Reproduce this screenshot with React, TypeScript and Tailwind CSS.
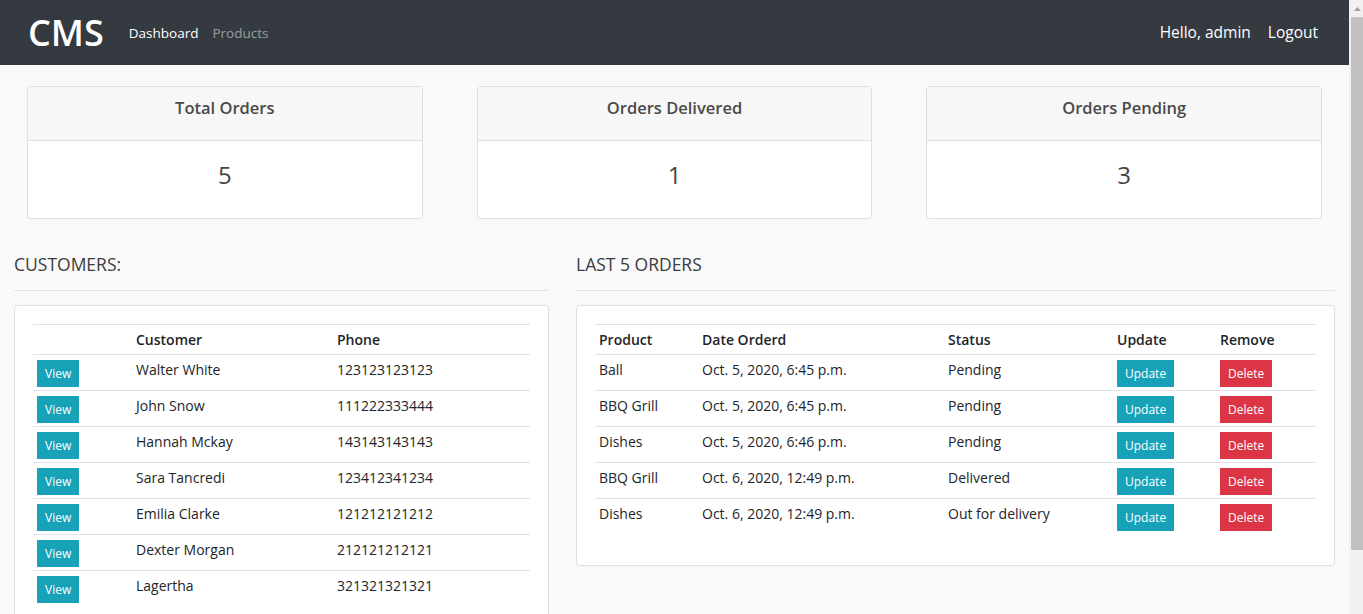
const customers = [
  { name: "Walter White", phone: "123123123123" },
  { name: "John Snow", phone: "111222333444" },
  { name: "Hannah Mckay", phone: "143143143143" },
  { name: "Sara Tancredi", phone: "123412341234" },
  { name: "Emilia Clarke", phone: "121212121212" },
  { name: "Dexter Morgan", phone: "212121212121" },
  { name: "Lagertha", phone: "321321321321" },
];

const orders = [
  { product: "Ball", date: "Oct. 5, 2020, 6:45 p.m.", status: "Pending" },
  { product: "BBQ Grill", date: "Oct. 5, 2020, 6:45 p.m.", status: "Pending" },
  { product: "Dishes", date: "Oct. 5, 2020, 6:46 p.m.", status: "Pending" },
  { product: "BBQ Grill", date: "Oct. 6, 2020, 12:49 p.m.", status: "Delivered" },
  { product: "Dishes", date: "Oct. 6, 2020, 12:49 p.m.", status: "Out for delivery" },
];

const stats = [
  { title: "Total Orders", value: 5 },
  { title: "Orders Delivered", value: 1 },
  { title: "Orders Pending", value: 3 },
];

function Btn({ label, color }: { label: string; color: "info" | "danger" }) {
  return (
    <button
      className={
        "h-[27px] px-2 text-[12px] leading-none text-white " +
        (color === "info" ? "bg-[#17a2b8]" : "bg-[#dc3545]")
      }
    >
      {label}
    </button>
  );
}

function SectionTitle({ children }: { children: string }) {
  return (
    <>
      <h5 className="text-[17.5px] leading-[21px] text-[#3d3d3d]">{children}</h5>
      <hr className="mt-[15px] border-t border-[#e3e3e3]" />
    </>
  );
}

export default function App() {
  const th = "pt-[5px] pb-[4px] px-[4px] text-left font-semibold border-t border-[#dee2e6]";
  const td = "pt-[5px] pb-[3px] px-[4px] align-top border-t border-[#dee2e6]";

  return (
    <div
      className="flex h-[614px] overflow-hidden bg-[#f9f9f9] text-[#212529]"
      style={{ fontFamily: '"Open Sans", "Noto Sans", sans-serif' }}
    >
      <div className="flex-1 min-w-0">
        {/* Navbar */}
        <nav className="flex h-[65px] items-center bg-[#343a40] pl-[28px] pr-[31px]">
          <span className="text-[36px] font-semibold leading-none text-white">CMS</span>
          <div className="ml-[25px] flex gap-[14px] pt-[2px] text-[13.5px]">
            <a className="text-white">Dashboard</a>
            <a className="text-white/50">Products</a>
          </div>
          <div className="ml-auto flex gap-[17px] text-[15.5px] text-white">
            <span>Hello, admin</span>
            <a>Logout</a>
          </div>
        </nav>

        {/* Stat cards */}
        <div className="grid grid-cols-3 gap-[54px] px-[27px] pt-[21px]">
          {stats.map((s) => (
            <div key={s.title} className="overflow-hidden rounded-[4px] border border-[#dfdfdf] bg-white">
              <div className="h-[54px] border-b border-[#dfdfdf] bg-[#f7f7f7] pt-[9px] text-center text-[16.5px] leading-[23px] font-semibold text-[#4a4a4a]">
                {s.title}
              </div>
              <div className="h-[77px] pt-[18px] text-center text-[24px] leading-[32px] text-[#444]">
                {s.value}
              </div>
            </div>
          ))}
        </div>

        {/* Tables */}
        <div className="flex gap-[27px] px-[14px] pt-[35px]">
          <div className="w-[535px] shrink-0">
            <SectionTitle>CUSTOMERS:</SectionTitle>
            <div className="mt-[14px] rounded-[4px] border border-[#dfdfdf] bg-white px-[18px] pt-[18px] pb-[31px]">
              <table className="w-full table-fixed border-collapse text-[14px] leading-[20px]">
                <thead>
                  <tr>
                    <th className={th + " w-[99px]"}></th>
                    <th className={th + " w-[201px]"}>Customer</th>
                    <th className={th}>Phone</th>
                  </tr>
                </thead>
                <tbody>
                  {customers.map((c) => (
                    <tr key={c.name}>
                      <td className={td}>
                        <Btn label="View" color="info" />
                      </td>
                      <td className={td}>{c.name}</td>
                      <td className={td}>{c.phone}</td>
                    </tr>
                  ))}
                </tbody>
              </table>
            </div>
          </div>

          <div className="min-w-0 flex-1">
            <SectionTitle>LAST 5 ORDERS</SectionTitle>
            <div className="mt-[14px] rounded-[4px] border border-[#dfdfdf] bg-white px-[18px] pt-[18px] pb-[31px]">
              <table className="w-full table-fixed border-collapse text-[14px] leading-[20px]">
                <thead>
                  <tr>
                    <th className={th + " w-[103px]"}>Product</th>
                    <th className={th + " w-[246px]"}>Date Orderd</th>
                    <th className={th + " w-[169px]"}>Status</th>
                    <th className={th + " w-[103px]"}>Update</th>
                    <th className={th}>Remove</th>
                  </tr>
                </thead>
                <tbody>
                  {orders.map((o, i) => (
                    <tr key={i}>
                      <td className={td}>{o.product}</td>
                      <td className={td}>{o.date}</td>
                      <td className={td}>{o.status}</td>
                      <td className={td}>
                        <Btn label="Update" color="info" />
                      </td>
                      <td className={td}>
                        <Btn label="Delete" color="danger" />
                      </td>
                    </tr>
                  ))}
                </tbody>
              </table>
            </div>
          </div>
        </div>
      </div>

      {/* Scrollbar */}
      <div className="flex w-[14px] shrink-0 flex-col bg-[#f1f1f1]">
        <div className="flex h-[17px] items-center justify-center pl-[2px]">
          <svg width="7" height="4" viewBox="0 0 7 4">
            <path d="M0 4 L3.5 0 L7 4 Z" fill="#a3a3a3" />
          </svg>
        </div>
        <div className="ml-[2px] h-[533px] bg-[#c1c1c1]" />
      </div>
    </div>
  );
}
